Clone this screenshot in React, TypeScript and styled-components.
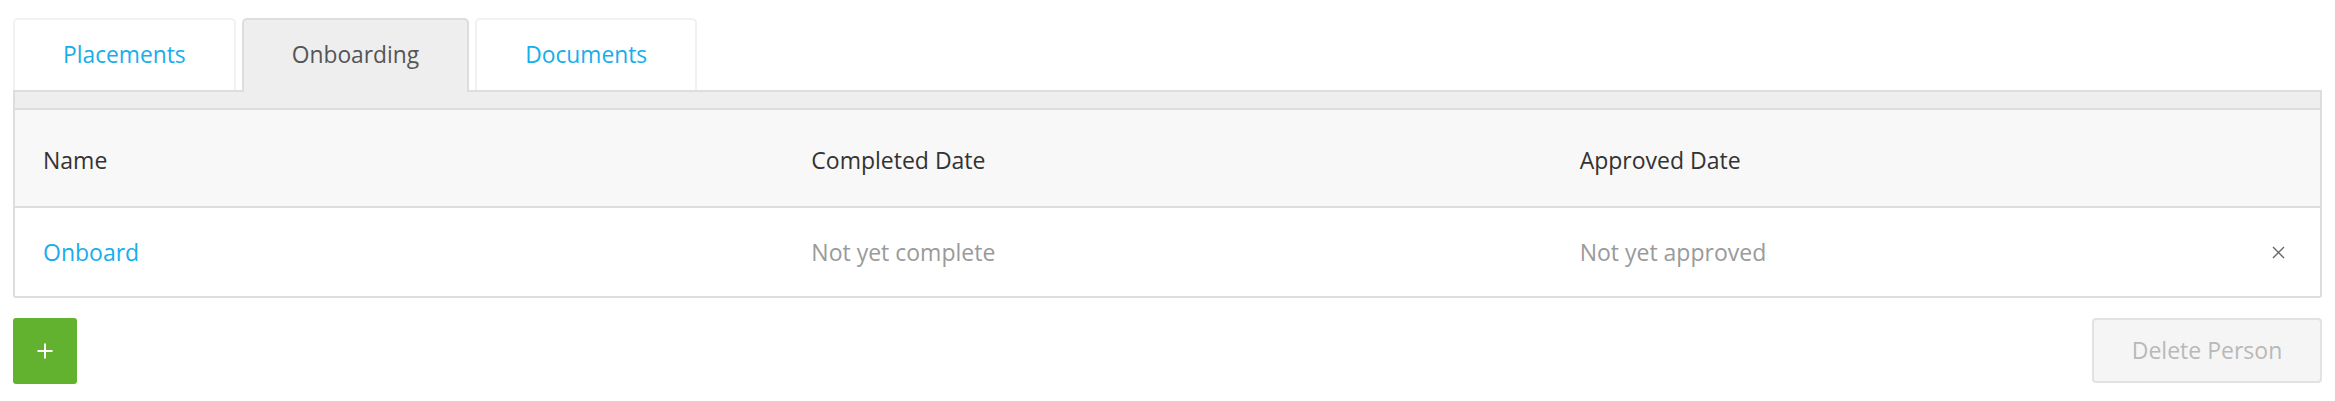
import React from "react";
import styled, { createGlobalStyle } from "styled-components";

const GlobalStyle = createGlobalStyle`
  html, body {
    margin: 0;
    padding: 0;
    background: #ffffff;
  }
  body {
    font-family: "Open Sans", "Liberation Sans", sans-serif;
    font-size: 23px;
    color: #333333;
  }
  * { box-sizing: border-box; }
`;

const Page = styled.div`
  padding: 18px 13px 17px 13px;
`;

const TabList = styled.div`
  display: flex;
  align-items: flex-start;
  gap: 6px;
  position: relative;
  z-index: 1;
  margin-bottom: -2px;
`;

const Tab = styled.div<{ $active?: boolean }>`
  height: ${(p) => (p.$active ? "74px" : "72px")};
  padding: 0 48px;
  display: flex;
  align-items: center;
  justify-content: center;
  border: 2px solid ${(p) => (p.$active ? "#dddddd" : "#f1f1f1")};
  border-bottom: none;
  border-radius: 5px 5px 0 0;
  background: ${(p) => (p.$active ? "#eeeeee" : "#ffffff")};
  color: ${(p) => (p.$active ? "#555555" : "#16aeec")};
  font-size: 22.8px;
  line-height: 1;
  padding-bottom: ${(p) => (p.$active ? "2px" : "0")};
  cursor: pointer;
`;

const Panel = styled.div`
  border: 2px solid #dddddd;
  border-radius: 0 0 3px 3px;
  background: #ffffff;
`;

const Strip = styled.div`
  height: 18px;
  background: #eeeeee;
  border-bottom: 2px solid #dddddd;
`;

const Row = styled.div<{ $head?: boolean }>`
  display: grid;
  grid-template-columns: 1fr 1fr 1fr;
  align-items: center;
  height: ${(p) => (p.$head ? "98px" : "88px")};
  background: ${(p) => (p.$head ? "#f8f8f8" : "#ffffff")};
  border-bottom: ${(p) => (p.$head ? "2px solid #dddddd" : "none")};
`;

const Cell = styled.div<{ $tone?: "head" | "link" | "muted" }>`
  padding-left: 28px;
  padding-right: 34px;
  display: flex;
  align-items: center;
  justify-content: space-between;
  font-size: 23px;
  line-height: 1;
  color: ${(p) =>
    p.$tone === "link" ? "#16aeec" : p.$tone === "muted" ? "#9a9a9a" : "#333333"};
  padding-top: ${(p) => (p.$tone === "head" ? "4px" : "0")};
`;

const RemoveButton = styled.button`
  border: none;
  background: transparent;
  padding: 0;
  width: 14px;
  height: 14px;
  display: flex;
  align-items: center;
  justify-content: center;
  cursor: pointer;
`;

const Footer = styled.div`
  display: flex;
  justify-content: space-between;
  align-items: flex-start;
  margin-top: 20px;
`;

const AddButton = styled.button`
  width: 64px;
  height: 66px;
  border: none;
  border-radius: 3px;
  background: #62b22f;
  display: flex;
  align-items: center;
  justify-content: center;
  padding: 0;
  cursor: pointer;
`;

const DeleteButton = styled.button`
  width: 230px;
  height: 65px;
  border: 2px solid #e2e2e2;
  border-radius: 4px;
  background: #f5f5f5;
  color: #b9b9b9;
  font-family: "Open Sans", "Liberation Sans", sans-serif;
  font-size: 23px;
  line-height: 1;
  padding: 0;
  cursor: not-allowed;
`;

export default function App() {
  return (
    <>
      <GlobalStyle />
      <Page>
        <TabList>
          <Tab>Placements</Tab>
          <Tab $active>Onboarding</Tab>
          <Tab>Documents</Tab>
        </TabList>
        <Panel>
          <Strip />
          <Row $head>
            <Cell $tone="head">Name</Cell>
            <Cell $tone="head">Completed Date</Cell>
            <Cell $tone="head">Approved Date</Cell>
          </Row>
          <Row>
            <Cell $tone="link">Onboard</Cell>
            <Cell $tone="muted">Not yet complete</Cell>
            <Cell $tone="muted">
              <span>Not yet approved</span>
              <RemoveButton aria-label="Remove">
                <svg width="13" height="13" viewBox="0 0 13 13">
                  <path d="M1 1 L12 12 M12 1 L1 12" stroke="#666666" strokeWidth="1.4" fill="none" />
                </svg>
              </RemoveButton>
            </Cell>
          </Row>
        </Panel>
        <Footer>
          <AddButton aria-label="Add">
            <svg width="16" height="16" viewBox="0 0 16 16">
              <path d="M8 0.5 V15.5 M0.5 8 H15.5" stroke="#ffffff" strokeWidth="2" fill="none" />
            </svg>
          </AddButton>
          <DeleteButton disabled>Delete Person</DeleteButton>
        </Footer>
      </Page>
    </>
  );
}
